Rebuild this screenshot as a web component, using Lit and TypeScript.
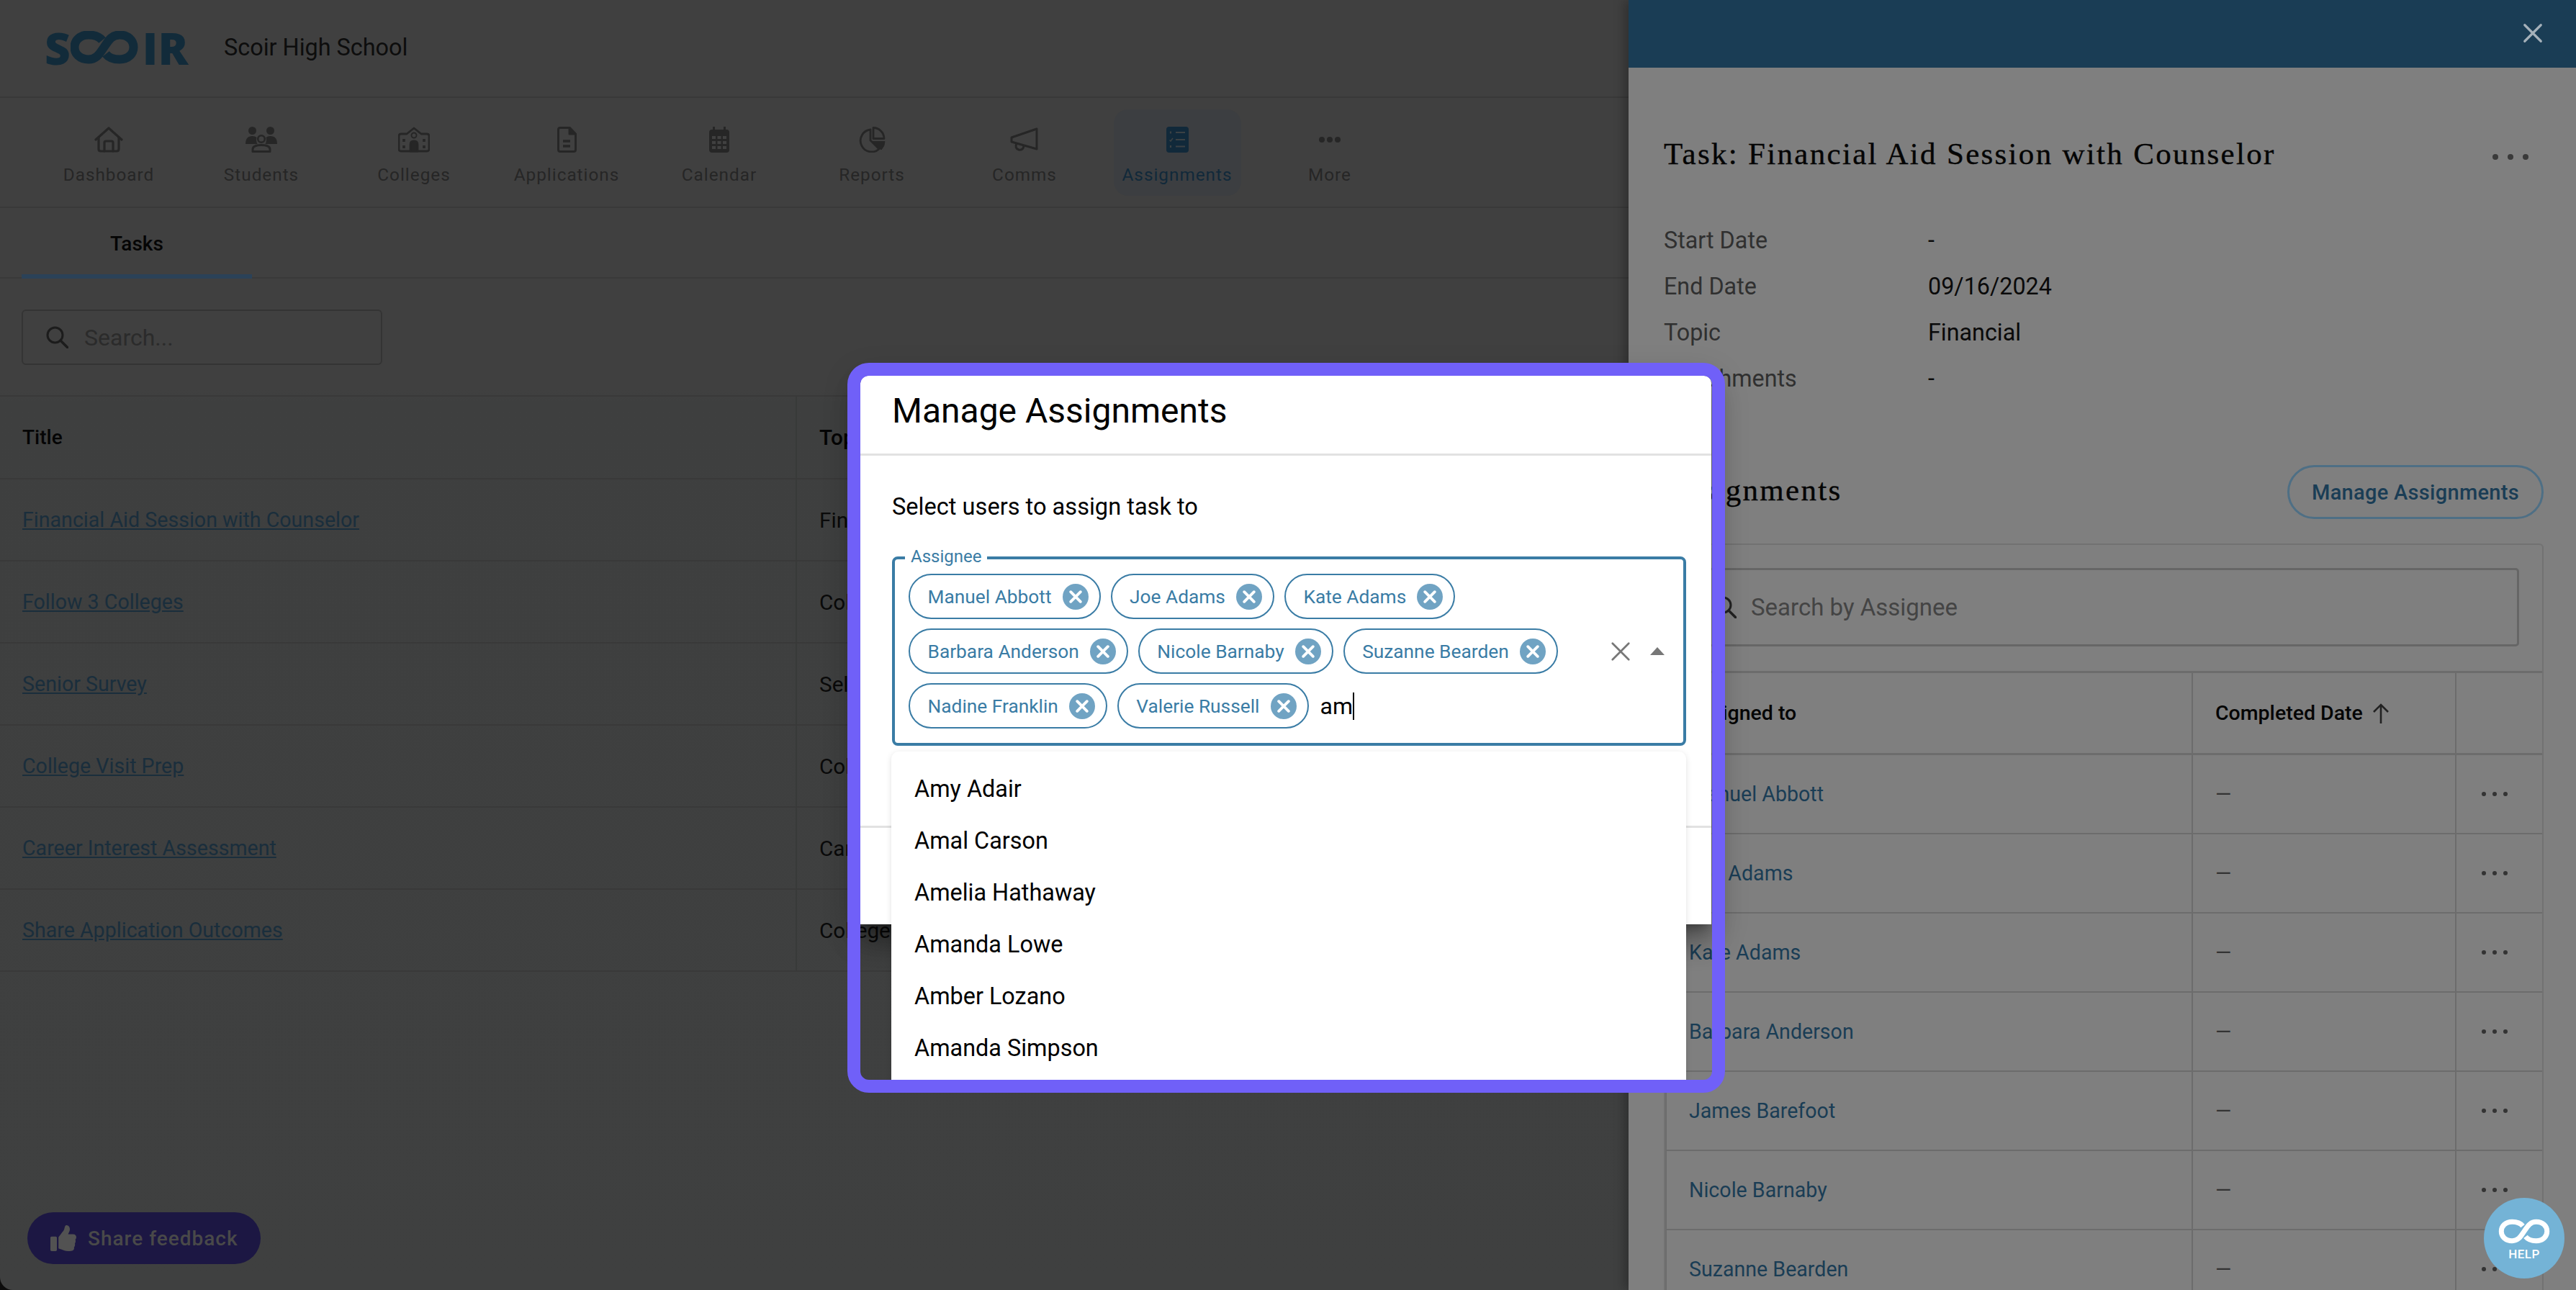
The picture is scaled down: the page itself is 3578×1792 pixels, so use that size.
import { LitElement, html, css, svg } from "lit";
import { customElement } from "lit/decorators.js";

const inf = (w: number) => svg`<path d="M44 13C40 8 33 5.500 25 5.500C13 5.500 5.500 13 5.500 22.500C5.500 32 13 39.500 25 39.500C37 39.500 41 30 46.500 22.500C52 15 56 5.500 68 5.500C80 5.500 87.500 13 87.500 22.500C87.500 32 80 39.500 68 39.500C60 39.500 53 37 49 32" fill="none" stroke="currentColor" stroke-width=${w}/>`;

const navIcons: Record<string, any> = {
  Dashboard: html`<svg class="ic" width="40" height="36" viewBox="0 0 40 36" fill="none" stroke="currentColor" stroke-width="3.200" stroke-linecap="round" stroke-linejoin="round"><path d="M2 18L20 2l18 16"/><path d="M6 15v16q0 3 3 3h22q3 0 3-3V15"/><path d="M14 34V22q0-2 2-2h8q2 0 2 2v12"/></svg>`,
  Students: html`<svg class="ic" width="44" height="36" viewBox="0 0 44 36" fill="currentColor"><circle cx="9.500" cy="5.500" r="5.500"/><circle cx="34.500" cy="5.500" r="5.500"/><path d="M0 24q0-11 9.500-11 4 0 6 2-1.500 4 1 9z"/><path d="M44 24q0-11-9.500-11-4 0-6 2 1.500 4-1 9z"/><circle cx="22" cy="17" r="4.800" fill="none" stroke="currentColor" stroke-width="2.600"/><path d="M10 34.500v-3q0-6 12-6t12 6v3z" fill="none" stroke="currentColor" stroke-width="3" stroke-linejoin="round"/></svg>`,
  Colleges: html`<svg class="ic" width="44" height="36" viewBox="0 0 44 36" fill="none" stroke="currentColor" stroke-width="2.800" stroke-linejoin="round"><path d="M4 10h8l10-8 10 8h8q3 0 3 3v18q0 3-3 3H4q-3 0-3-3V13q0-3 3-3z"/><circle cx="22" cy="12" r="3.500" stroke-width="2"/><path d="M17 34V25q0-5 5-5t5 5v9z" fill="currentColor"/><path d="M8 17v4M8 26v4M36 17v4M36 26v4" stroke-width="3.600"/></svg>`,
  Applications: html`<svg class="ic" width="27" height="36" viewBox="0 0 27 36" fill="none" stroke="currentColor" stroke-width="3" stroke-linejoin="round"><path d="M4 1.500h13.500l8 8.500v22q0 2.500-2.500 2.500H4q-2.500 0-2.500-2.500V4Q1.500 1.500 4 1.500z"/><path d="M17 2v8h8" fill="currentColor"/><path d="M8 20h10M8 27h10" stroke-width="3.400"/></svg>`,
  Calendar: html`<svg class="ic" width="30" height="36" viewBox="0 0 30 36"><path fill="currentColor" d="M6 0h3v4h12V0h3v4h1q4 0 4 4v24q0 4-4 4H5q-4 0-4-4V8q0-4 4-4h1z"/><g fill="#404040"><rect x="5" y="13" width="5" height="4"/><rect x="12.500" y="13" width="5" height="4"/><rect x="20" y="13" width="5" height="4"/><rect x="5" y="20" width="5" height="4"/><rect x="12.500" y="20" width="5" height="4"/><rect x="20" y="20" width="5" height="4"/><rect x="5" y="27" width="5" height="4"/><rect x="12.500" y="27" width="5" height="4"/><rect x="20" y="27" width="5" height="4"/></g></svg>`,
  Reports: html`<svg class="ic" width="38" height="36" viewBox="0 0 38 36" fill="none" stroke="currentColor" stroke-width="2.800" stroke-linejoin="round"><path d="M17 4A15.500 15.500 0 1 0 29 31L17 19z"/><path d="M21 1.500A15 15 0 0 1 36 16.500H21z"/><path d="M20 20.500h17A17 17 0 0 1 32 32z" fill="currentColor" stroke-width="1"/></svg>`,
  Comms: html`<svg class="ic" width="40" height="36" viewBox="0 0 40 36" fill="none" stroke="currentColor" stroke-width="3" stroke-linejoin="round"><path d="M37 3v28L2 21v-6z"/><path d="M9 23q-3 7 3 9 6 1 7-5"/></svg>`,
  Assignments: html`<svg class="ic" width="31" height="36" viewBox="0 0 31 36"><rect width="31" height="36" rx="4" fill="currentColor"/><g stroke="#3b4144" stroke-width="2.200" fill="none"><path d="M13 8h13M13 18h13M13 27.500h13"/><path d="M6 6.500v3M6 26v3"/><path d="M4.500 18.500l1.500 1.500 3-4" stroke-width="1.600"/></g></svg>`,
  More: html`<svg class="ic" width="32" height="36" viewBox="0 0 32 36" fill="currentColor"><circle cx="5" cy="18" r="4"/><circle cx="16" cy="18" r="4"/><circle cx="27" cy="18" r="4"/></svg>`,
};

const xIcon = (s: number, w = 3) => html`<svg width=${s} height=${s} viewBox="0 0 24 24" fill="none" stroke="currentColor" stroke-width=${w} stroke-linecap="round"><path d="M3 3l18 18M21 3L3 21"/></svg>`;
const mag = (s: number) => html`<svg width=${s} height=${s} viewBox="0 0 31 31" fill="none" stroke="currentColor" stroke-width="3"><circle cx="12.500" cy="12.500" r="10.500"/><path d="M20 20l10 10" stroke-linecap="round" stroke-width="3.400"/></svg>`;
const bigDots = html`<svg width="52" height="10" viewBox="0 0 52 10" fill="currentColor"><circle cx="5" cy="5" r="4"/><circle cx="26" cy="5" r="4"/><circle cx="47" cy="5" r="4"/></svg>`;
const rowDots = html`<svg width="36" height="8" viewBox="0 0 36 8" fill="currentColor"><circle cx="3" cy="4" r="3"/><circle cx="18" cy="4" r="3"/><circle cx="33" cy="4" r="3"/></svg>`;

const chips = ["Manuel Abbott","Joe Adams","Kate Adams","Barbara Anderson","Nicole Barnaby","Suzanne Bearden","Nadine Franklin","Valerie Russell"];
const options = ["Amy Adair","Amal Carson","Amelia Hathaway","Amanda Lowe","Amber Lozano","Amanda Simpson"];
const tasks: [string,string][] = [["Financial Aid Session with Counselor","Financial"],["Follow 3 Colleges","College"],["Senior Survey","Self"],["College Visit Prep","College"],["Career Interest Assessment","Career"],["Share Application Outcomes","College"]];
const people = ["Manuel Abbott","Joe Adams","Kate Adams","Barbara Anderson","James Barefoot","Nicole Barnaby","Suzanne Bearden"];
const meta: [string,string][] = [["Start Date","-"],["End Date","09/16/2024"],["Topic","Financial"],["Attachments","-"]];

@customElement("app-root")
export class AppRoot extends LitElement {
  static styles = css`
    :host { display:block; width:3578px; height:1792px; font-family:Roboto,"Liberation Sans",sans-serif; background:#0c0c0c; position:relative; overflow:hidden; }
    * { box-sizing:border-box; }
    .page { width:2262px; height:1792px; background:#404040; border-bottom-left-radius:18px; display:flex; flex-direction:column; background-image:linear-gradient(180deg,#404040 0,#404040 540px,#3e3f3f 560px,#3f4040 1792px); }
    .top { height:136px; flex:none; border-bottom:2px solid #393939; display:flex; align-items:center; padding:0 0 3px 62px; }
    .logo { display:flex; align-items:center; height:46px; color:#122b3a; font:800 62px/46px "Open Sans",sans-serif; width:200px; }
    .logo svg { margin:0 6px 0 0; flex:none; }
    .logo span { display:block; }
    .school { margin-left:49px; font-size:32.400px; color:#0d0d0d; }
    .nav { height:153px; flex:none; border-bottom:2px solid #393939; display:flex; padding:16px 0 0 45px; }
    .item { width:212px; flex:none; display:flex; flex-direction:column; align-items:center; color:#262626; font-size:24.300px; letter-spacing:1px; height:120px; padding-top:24px; position:relative; }
    .item.on { color:#11293a; }
    .item.on::before { content:""; position:absolute; top:0; bottom:0; left:18px; right:17px; border-radius:20px; background:#3c3e41; }
    .item .ic { position:relative; flex:none; height:36px; }
    .item .lb { position:relative; margin-top:14px; line-height:34px; }
    .tabs { height:98px; flex:none; border-bottom:2px solid #393939; padding-left:30px; display:flex; }
    .tab { width:320px; height:98px; border-bottom:6px solid #2b4258; display:flex; align-items:center; justify-content:center; font-size:28px; font-weight:500; color:#050505; padding-top:6px; }
    .srch { margin:43px 0 0 30px; width:501px; height:77px; flex:none; border:2.500px solid #343434; border-radius:6px; display:flex; align-items:center; padding-left:32px; color:#1c1c1c; font-size:32px; }
    .srch span { margin-left:22px; color:#2b2b2b; }
    .ttable { margin-top:42px; border-top:2px solid #393939; display:grid; grid-template-columns:1105px 1fr; }
    .tc { height:114px; border-bottom:2px solid #393939; display:flex; align-items:center; padding-left:31px; font-size:28.600px; color:#0a0a0a; white-space:nowrap; }
    .tc.h { height:115px; font-size:28px; font-weight:500; color:#050505; }
    .tc.b { border-left:2px solid #383a39; font-size:29.700px; }
    .tc a { color:#1a2e3c; text-decoration:underline; }
    .fb { position:absolute; left:38px; top:1684px; width:324px; height:72px; border-radius:36px; background:#1c1743; color:#494949; display:flex; align-items:center; padding-left:32px; gap:16px; font-size:28px; font-weight:500; letter-spacing:1px; }
    .drawer { position:absolute; left:2262px; top:0; width:1316px; height:1792px; background:#7f7f7f; box-shadow:-6px 0 14px rgba(0,0,0,.25); display:flex; flex-direction:column; overflow:hidden; }
    .bar { height:94px; flex:none; background:#1a3d55; color:#a5b1ba; display:flex; justify-content:flex-end; align-items:center; padding-right:45px; padding-bottom:2px; }
    .dbody { padding:89px 45px 0 49px; }
    .ttl { height:60px; display:flex; align-items:center; justify-content:space-between; font:400 43px "Liberation Serif",serif; letter-spacing:2.300px; -webkit-text-stroke:.4px #050505; color:#050505; padding-right:2px; }
    .ttl svg { color:#3a3a3a; margin-top:10px; margin-right:18px; }
    .meta { margin-top:59px; display:grid; grid-template-columns:367px 1fr; grid-auto-rows:64px; align-items:center; font-size:32.300px; color:#0a0a0a; }
    .meta .k { color:#303030; }
    .sec { margin-top:88px; display:flex; justify-content:space-between; align-items:center; font:400 43px "Liberation Serif",serif; letter-spacing:2.300px; -webkit-text-stroke:.4px #050505; color:#050505; }
    .sec > span { padding-bottom:7px; }
    .mbtn { width:356px; height:75px; border:3px solid #4e6f85; border-radius:38px; display:flex; align-items:center; justify-content:center; font:500 29px Roboto,sans-serif; color:#1a3d55; letter-spacing:.3px; -webkit-text-stroke:0; }
    .card { margin-top:34px; border:2px solid #727272; border-bottom:0; border-radius:6px 6px 0 0; padding-top:32px; }
    .dsrch { margin:0 32px; height:109px; border:3px solid #666; border-radius:5px; display:flex; align-items:center; padding-left:33px; gap:20px; font-size:33px; color:#444; }
    .dsrch svg { color:#222; flex:none; }
    .dt { margin-top:34px; display:grid; grid-template-columns:731px 366px 1fr; border-top:3px solid #6c6c6c; }
    .c { height:110px; border-bottom:2px solid #6c6c6c; display:flex; align-items:center; padding-left:31px; font-size:28.600px; color:#1a3d55; }
    .c.h { height:114px; border-bottom-width:3px; font-size:28.500px; font-weight:500; color:#050505; }
    .c + .c { border-left:2px solid #6c6c6c; }
    .c.d { color:#333; }
    .c.m { padding-left:0; justify-content:center; color:#333; padding-right:14px; }
    .c.h svg { margin-left:13px; color:#222; }
    .help { position:absolute; left:3450px; top:1664px; width:112px; height:112px; border-radius:50%; background:#74b3d6; color:#fff; display:flex; flex-direction:column; align-items:center; padding-top:29px; font-size:17px; font-weight:500; line-height:18px; letter-spacing:.5px; gap:5px; }
    .modal { position:absolute; left:1195px; top:522px; width:1182px; height:762px; background:#fff; border-radius:10px 10px 0 0; box-shadow:0 11px 15px -7px rgba(0,0,0,.3),0 24px 38px 3px rgba(0,0,0,.24),0 9px 46px 8px rgba(0,0,0,.2); display:flex; flex-direction:column; color:#000; }
    .mh { height:111px; flex:none; border-bottom:3px solid #e2e2e2; padding:21px 0 0 44px; font-size:48px; line-height:56px; }
    .mb { flex:1; padding:51px 35px 0 44px; }
    .sub { font-size:32.600px; line-height:40px; }
    .field { margin-top:49px; height:263px; border:4px solid #3a7ca5; border-radius:8px; display:flex; align-items:center; padding:0 0 0 19px; position:relative; }
    .legend { position:absolute; left:14px; top:-19px; background:#fff; padding:0 8px; font-size:24px; line-height:30px; color:#3a7ca5; }
    .chips { width:950px; flex:none; display:flex; flex-wrap:wrap; gap:13px 14px; align-items:center; }
    .chip { height:63px; border:2.500px solid #3a7ca5; border-radius:32px; display:flex; align-items:center; padding:0 15px 0 24.500px; color:#3a7ca5; font-size:26.300px; gap:15px; }
    .chip svg { flex:none; }
    .typed { display:flex; align-items:center; font-size:32px; height:63px; margin-left:2px; }
    .caret { width:2px; height:38px; background:#000; }
    .adorn { position:absolute; right:26px; top:0; bottom:0; display:flex; align-items:center; gap:26px; color:#777; }
    .mf { height:137px; flex:none; border-top:3px solid #e2e2e2; }
    .dd { position:absolute; left:43px; top:522px; width:1104px; height:456px; background:#fff; border-radius:10px 10px 0 0; box-shadow:0 2px 8px rgba(0,0,0,.12); padding-top:16px; overflow:hidden; }
    .opt { height:72px; display:flex; align-items:center; padding-left:32px; font-size:32.400px; color:#000; }
    .ring { position:absolute; left:1177px; top:504px; width:1219px; height:1014px; border:18px solid #7060f8; border-radius:30px; pointer-events:none; }
  `;

  render() {
    return html`
      <div class="page">
        <div class="top">
          <div class="logo" role="img" aria-label="SCOIR"><span>S</span><svg width="94" height="46" viewBox="0 0 94 46">${inf(12)}</svg><span>IR</span></div>
          <div class="school">Scoir High School</div>
        </div>
        <div class="nav">
          ${Object.keys(navIcons).map(k => html`<div class="item ${k === "Assignments" ? "on" : ""}">${navIcons[k]}<span class="lb">${k}</span></div>`)}
        </div>
        <div class="tabs"><div class="tab">Tasks</div></div>
        <div class="srch">${mag(31)}<span>Search...</span></div>
        <div class="ttable">
          <div class="tc h">Title</div><div class="tc h b">Topic</div>
          ${tasks.map(t => html`<div class="tc"><a>${t[0]}</a></div><div class="tc b">${t[1]}</div>`)}
        </div>
      </div>
      <div class="fb">
        <svg width="36" height="36" viewBox="0 0 512 512" fill="#525252"><path d="M104 224H24c-13.255 0-24 10.745-24 24v240c0 13.255 10.745 24 24 24h80c13.255 0 24-10.745 24-24V248c0-13.255-10.745-24-24-24zM384 81.452c0 42.416-25.97 66.208-33.277 94.548h101.723c33.397 0 59.397 27.746 59.553 58.098.084 17.938-7.546 37.249-19.439 49.197l-.11.11c9.836 23.337 8.237 56.037-9.308 79.469 8.681 25.895-.069 57.704-16.382 74.757 4.298 17.598 2.244 32.575-6.148 44.632C440.202 511.587 389.616 512 346.839 512l-2.845-.001c-48.287-.017-87.806-17.598-119.56-31.725-15.957-7.099-36.821-15.887-52.651-16.178-6.54-.12-11.783-5.457-11.783-11.998v-213.77c0-3.2 1.282-6.271 3.558-8.521 39.614-39.144 56.648-80.587 89.117-113.111 14.804-14.832 20.188-37.236 25.393-58.902C282.515 39.293 291.817 0 312 0c24 0 72 8 72 81.452z"/></svg>
        <span>Share feedback</span>
      </div>
      <div class="drawer">
        <div class="bar">${xIcon(30, 2.600)}</div>
        <div class="dbody">
          <div class="ttl"><span>Task: Financial Aid Session with Counselor</span>${bigDots}</div>
          <div class="meta">${meta.map(m => html`<div class="k">${m[0]}</div><div>${m[1]}</div>`)}</div>
          <div class="sec"><span>Assignments</span><div class="mbtn">Manage Assignments</div></div>
          <div class="card">
            <div class="dsrch">${mag(31)}<span>Search by Assignee</span></div>
            <div class="dt">
              <div class="c h">Assigned to</div>
              <div class="c h">Completed Date<svg width="24" height="30" viewBox="0 0 24 30" fill="none" stroke="currentColor" stroke-width="2.600"><path d="M12 29V3M2 13L12 3l10 10"/></svg></div>
              <div class="c h"></div>
              ${people.map(p => html`<div class="c">${p}</div><div class="c d">—</div><div class="c m">${rowDots}</div>`)}
            </div>
          </div>
        </div>
      </div>
      <div class="help">
        <svg width="72" height="35" viewBox="0 0 93 45">${inf(9)}</svg>
        <span>HELP</span>
      </div>
      <div class="modal">
        <div class="mh">Manage Assignments</div>
        <div class="mb">
          <div class="sub">Select users to assign task to</div>
          <div class="field">
            <span class="legend">Assignee</span>
            <div class="chips">
              ${chips.map(c => html`<div class="chip"><span>${c}</span>
                <svg width="36" height="36" viewBox="0 0 37 37"><circle cx="18.500" cy="18.500" r="18.500" fill="#70a3c3"/><path d="M11.500 11.500l14 14M25.500 11.500l-14 14" stroke="#fff" stroke-width="4" stroke-linecap="round"/></svg></div>`)}
              <div class="typed">am<span class="caret"></span></div>
            </div>
            <div class="adorn">${xIcon(30, 2.200)}<svg width="20" height="11" viewBox="0 0 20 11" fill="currentColor"><path d="M10 0l10 11H0z"/></svg></div>
          </div>
        </div>
        <div class="mf"></div>
        <div class="dd">${options.map(o => html`<div class="opt">${o}</div>`)}</div>
      </div>
      <div class="ring"></div>
    `;
  }
}
